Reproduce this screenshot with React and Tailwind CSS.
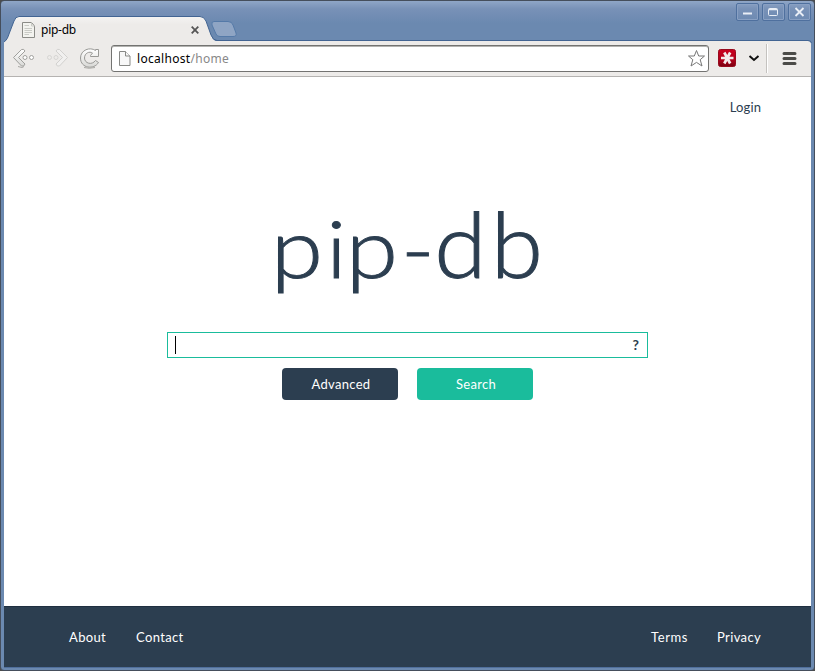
import React from "react";

function WindowButton({ children }) {
  return (
    <div className="flex h-[18px] w-[23px] items-center justify-center rounded-[2px] border border-[#4f709e] shadow-[inset_0_0_0_1px_#89a0c3]">
      <svg width="13" height="12" viewBox="0 0 13 12" fill="none" stroke="#e9eef6">
        {children}
      </svg>
    </div>
  );
}

function TabStrip() {
  return (
    <div className="relative flex h-[41px] justify-end">
      <svg className="absolute left-0 top-0" width="815" height="43" viewBox="0 0 815 43">
        <defs>
          <linearGradient id="tab" x1="0" y1="0" x2="0" y2="1">
            <stop offset="0" stopColor="#f4f3f2" />
            <stop offset="0.3" stopColor="#edebe9" />
            <stop offset="1" stopColor="#edebe9" />
          </linearGradient>
        </defs>
        <path d="M211 40.500H808Q811 40.500 811.500 43" fill="none" stroke="#426492" />
        <path d="M4 43C7 40 8 37 9 34L14 21Q15.500 16.500 19 16.500H200Q204 16.500 206 21L211 35Q213 41 217 41V43Z" fill="url(#tab)" />
        <path d="M4 42C7 40 8 37 9 34L14 21Q15.500 16.500 19 16.500H200Q204 16.500 206 21L211 35Q213 40.500 217 40.500" fill="none" stroke="#426492" />
        <path d="M214 21.500H228Q232 21.500 233 25L236 33Q237 36.500 233 36.500H220Q217 36.500 216 34L212 25Q211 21.500 214 21.500Z" fill="#8fa5c4" stroke="#557aa8" />
        <path d="M22.500 22.500H31.500L34.500 26V37.500H22.500Z" fill="#f3f3ef" stroke="#8b8b87" />
        <path d="M31.500 22.500V26H34.500M24.500 25.500H29M24.500 28.500H32M24.500 30.500H32M24.500 32.500H32M24.500 34.500H29" fill="none" stroke="#c9cac5" />
        <path d="M191.700 26.700L198.300 33.300M198.300 26.700L191.700 33.300" stroke="#555" strokeWidth="1.800" />
      </svg>
      <span className="absolute left-[41px] top-[21px] font-['Noto_Sans',sans-serif] text-[12px] leading-[17px] tracking-[-0.25px] text-black">pip-db</span>
      <div className="flex gap-[3px] pr-[4px] pt-[3px]">
        <WindowButton>
          <path d="M2 7.500H11" strokeWidth="2" />
        </WindowButton>
        <WindowButton>
          <rect x="1.500" y="2.500" width="9" height="7" rx="1" />
          <path d="M2 3.500H10" strokeWidth="1.500" />
        </WindowButton>
        <WindowButton>
          <path d="M2.500 2L10.500 10M10.500 2L2.500 10" strokeWidth="1.800" />
        </WindowButton>
      </div>
    </div>
  );
}

function Toolbar() {
  return (
    <div className="mx-[4px] flex h-[36px] items-center rounded-tr-[3px] border-b border-[#b5b3b1] bg-[#edebe9]">
      <svg width="107" height="35" viewBox="4 41 107 35" fill="none" strokeLinejoin="round">
        <defs>
          <linearGradient id="icon" x1="0" y1="0" x2="0" y2="1">
            <stop offset="0" stopColor="#fff" />
            <stop offset="1" stopColor="#d8d8d5" />
          </linearGradient>
        </defs>
        <path d="M13.500 57.500L21.500 49.500Q24 48.500 25 51L18.500 57.500L25 64Q24 67 21.500 66Z" fill="url(#icon)" stroke="#a0a09d" />
        <circle cx="25" cy="57.500" r="2" fill="#fff" stroke="#a0a09d" />
        <circle cx="31.500" cy="57.500" r="2" fill="#fff" stroke="#a0a09d" />
        <path d="M18 66.500L22 67.500L24 66.500" stroke="#a9a8a5" />
        <path d="M67.500 57.500L59.500 49.500Q57 48.500 56 51L62.500 57.500L56 64Q57 67 59.500 66Z" fill="#f1f0ef" stroke="#d2d1cf" />
        <circle cx="49.500" cy="57.500" r="2" stroke="#d6d5d3" />
        <circle cx="56" cy="57.500" r="2" stroke="#d6d5d3" />
        <path d="M95.500 49.500V50.500C90 46.500 80.500 50 80.500 58C80.500 68.500 94 70 98.500 62.500L95.500 60.500C92 65.500 84.500 63.500 84.500 58C84.500 53 89.500 51 92.500 53L90.500 55.500V56.500H98.500V49.500Z" fill="url(#icon)" stroke="#999996" />
        <path d="M84 67.500Q89 69 95 67.500" stroke="#aaa9a5" />
      </svg>
      <div className="flex h-[27px] w-[598px] items-center rounded-[3px] border border-[#737371] bg-white shadow-[inset_0_1px_0_#b3b3b0]">
        <svg className="ml-[6px]" width="14" height="16" viewBox="0 0 14 16" fill="#f8f8f8" stroke="#888986">
          <path d="M1.500 .5H7.500L12 5V14.500H1.500Z" />
          <path d="M7.500 .5V5H12" />
        </svg>
        <span className="ml-[5px] flex-1 font-['Noto_Sans',sans-serif] text-[12px] leading-[16px] tracking-[0.3px] text-black">
          localhost<span className="text-[#888]">/home</span>
        </span>
        <svg className="mr-[2px]" width="19" height="19" viewBox="0 0 19 19" fill="#fff" stroke="#777">
          <path d="M9.500 1.500L11.700 7H17.500L13.200 10.700L15 17L9.500 13.400L4 17L5.800 10.700L1.500 7H7.300Z" strokeLinejoin="round" />
        </svg>
      </div>
      <svg width="102" height="35" viewBox="709 41 102 35" fill="none">
        <defs>
          <linearGradient id="red" x1="0" y1="0" x2="0" y2="1">
            <stop offset="0" stopColor="#c9001f" />
            <stop offset=".6" stopColor="#b3001b" />
            <stop offset="1" stopColor="#790010" />
          </linearGradient>
        </defs>
        <rect x="718.500" y="49.500" width="17" height="17" rx="2" fill="url(#red)" stroke="#970b1d" />
        <path d="M721 58H733.500M724.300 52.500L730.200 63.500M730.200 52.500L724.300 63.500" stroke="#f4e9eb" strokeWidth="2.700" />
        <path d="M749.500 56L754 60L758.500 56" stroke="#111" strokeWidth="2" />
        <path d="M766.500 44V73" stroke="#c4c2bf" />
        <path d="M767.500 44V73" stroke="#fff" />
        <path d="M784 53.500H795M784 58.500H795M784 63.500H795" stroke="#4b4b48" strokeWidth="3" strokeLinecap="round" />
      </svg>
    </div>
  );
}

/* Wordmark letters: horizontal offset, horizontal stretch, vertical stretch */
const letters = [
  ["p", 270.8, 1.2, 1.04],
  ["i", 326.2, 1.15, 1],
  ["p", 345.8, 1.2, 1.04],
  ["-", 401, 1.15, 1],
  ["d", 434.2, 1.2, 1.14],
  ["b", 490.8, 1.2, 1.14],
];

function Logo() {
  return (
    <svg className="ml-[260px] mt-[108px] block" width="300" height="130" viewBox="260 185 300 130">
      <g fontSize="79" stroke="#2c3e50" strokeWidth="0.9" className="fill-[#2c3e50] font-['Lato',sans-serif] font-light">
        {letters.map(([ch, x, sx, sy], i) => (
          <text key={i} transform={`translate(${x} 278) scale(${sx} ${sy})`}>
            {ch}
          </text>
        ))}
      </g>
    </svg>
  );
}

export default function App() {
  return (
    <div className="h-[671px] w-[815px] bg-[#4c4c4c]">
      <div className="flex h-[671px] w-[815px] flex-col overflow-hidden rounded-[4px] border border-[#454e5c] bg-[linear-gradient(#8fa6c7_0,#7891b7_8px,#6b89b0_22px,#6b89b0_100%)]">
        <div className="-ml-px -mt-px flex w-[815px] flex-1 flex-col">
          <TabStrip />
          <Toolbar />
          <main className="mx-[4px] flex h-[529px] flex-col bg-white font-['Lato',sans-serif] text-[13px] text-[#2c3e50]">
            <a className="mr-[50px] mt-[20px] self-end leading-[20px] tracking-[0.1px]">Login</a>
            <div className="-ml-[4px] -mt-[40px]">
              <Logo />
            </div>
            <div className="ml-[163px] mt-[17px] flex h-[26px] w-[481px] shrink-0 items-center justify-between border border-[#1abc9c] px-[7px]">
              <span className="h-[18px] w-px bg-black" />
              <span className="pr-px text-[14px] font-bold leading-[18px]">?</span>
            </div>
            <div className="ml-[278px] mt-[10px] flex gap-[19px] tracking-[0.3px] text-white">
              <button className="h-[32px] w-[116px] rounded-[4px] bg-[#2c3e50] pl-[2px] pt-[2px]">Advanced</button>
              <button className="h-[32px] w-[116px] rounded-[4px] bg-[#1abc9c] pl-[2px] pt-[2px]">Search</button>
            </div>
          </main>
          <footer className="mx-[4px] flex h-[61px] items-center border-t border-[#1f2f40] bg-[#2c3e50] pl-[65px] pr-[50px] pt-[2px] font-['Lato',sans-serif] text-[13px] tracking-[0.35px] text-white">
            <a>About</a>
            <a className="ml-[30px]">Contact</a>
            <a className="ml-auto tracking-[0.6px]">Terms</a>
            <a className="ml-[29px]">Privacy</a>
          </footer>
          <div className="mx-[4px] h-px bg-[#506f9c]" />
        </div>
      </div>
    </div>
  );
}
